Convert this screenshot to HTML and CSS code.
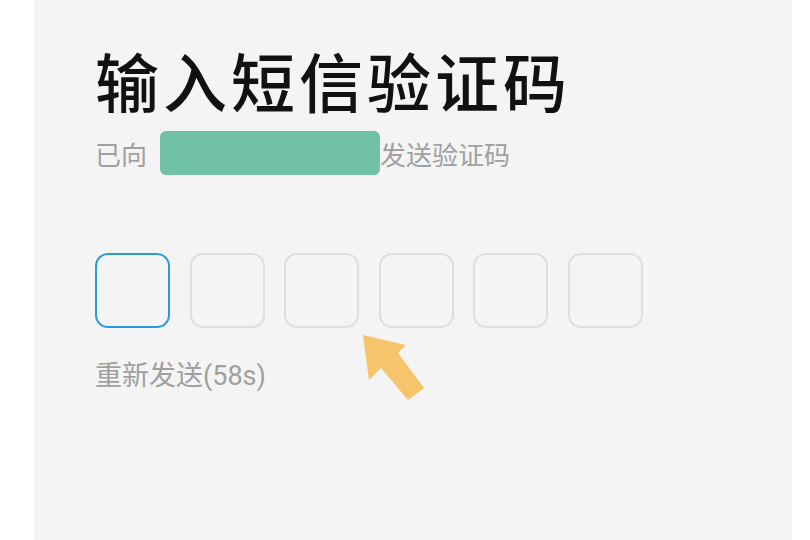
FILE: index.html
```html
<!DOCTYPE html>
<html lang="zh">
<head>
    <meta charset="UTF-8">
    <meta name="viewport" content="width=device-width, initial-scale=1.0">
    <title>输入短信验证码</title>
    <link rel="stylesheet" href="styles.css">
</head>
<body>

    <div class="panel">
        <h1 class="title">输入短信验证码</h1>
        <p class="sub">已向<span class="masked"></span>发送验证码</p>

        <div class="codes">
            <div class="cell active"></div>
            <div class="cell"></div>
            <div class="cell"></div>
            <div class="cell"></div>
            <div class="cell"></div>
            <div class="cell"></div>
        </div>

        <p class="resend">重新发送(58s)</p>

        <svg class="pointer" width="70" height="80" viewBox="0 0 70 80">
            <polygon points="2,5 45,15 37,23 63,58 47,70 20,38 8,50" fill="#f6c46b"/>
        </svg>
    </div>

</body>
</html>
```

FILE: styles.css
```css
body {
    margin: 0;
    background: #fff;
    font-family: "Noto Sans CJK SC", "Noto Sans", sans-serif;
}
.panel {
    position: relative;
    margin-left: 34px;
    width: 758px;
    height: 540px;
    background: #f4f4f4;
    padding: 34px 0 0 61px;
    box-sizing: border-box;
}
.title {
    margin: 0;
    font-size: 64px;
    font-weight: 500;
    letter-spacing: 4px;
    line-height: 90px;
    color: #111;
}
.sub {
    margin: 7px 0 0;
    display: flex;
    align-items: center;
    font-size: 26px;
    color: #a0a0a0;
    height: 44px;
}
.masked {
    display: inline-block;
    width: 220px;
    height: 44px;
    margin-left: 13px;
    background: #71c1a7;
    border-radius: 6px;
}
.codes {
    display: flex;
    gap: 19.6px;
    margin-top: 78px;
}
.cell {
    width: 75px;
    height: 75px;
    box-sizing: border-box;
    border: 2px solid #dedede;
    border-radius: 13px;
}
.cell.active {
    border-color: #2a9ae0;
}
.resend {
    margin: 26px 0 0;
    font-size: 27px;
    font-family: Roboto, "Noto Sans CJK SC", sans-serif;
    color: #a0a0a0;
}
.pointer {
    position: absolute;
    left: 327px;
    top: 330px;
}
```
